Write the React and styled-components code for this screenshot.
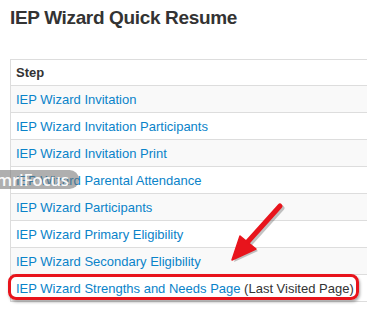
import React from 'react'
import styled, { createGlobalStyle } from 'styled-components'

const steps = [
  'IEP Wizard Invitation',
  'IEP Wizard Invitation Participants',
  'IEP Wizard Invitation Print',
  'IEP Wizard Parental Attendance',
  'IEP Wizard Participants',
  'IEP Wizard Primary Eligibility',
  'IEP Wizard Secondary Eligibility',
  'IEP Wizard Strengths and Needs Page',
]

const GlobalStyle = createGlobalStyle`
  html, body {
    margin: 0;
    padding: 0;
    background: #fff;
    font-family: "Liberation Sans", Arial, sans-serif;
  }
`

function App() {
  return (
    <Page>
      <GlobalStyle />
      <Title>IEP Wizard Quick Resume</Title>
      <Table>
        <thead>
          <tr>
            <Th>Step</Th>
          </tr>
        </thead>
        <tbody>
          {steps.map((step, i) =>
            <Row key={step} striped={i % 2 === 0}>
              <Td>
                <StepLink href="#">{step}</StepLink>
                {i === steps.length - 1 && <Note> (Last Visited Page)</Note>}
              </Td>
            </Row>)}
        </tbody>
      </Table>

      <Highlight />
      <Arrow width="80" height="80" viewBox="0 0 80 80">
        <g transform="translate(2,2)" opacity="0.35">
          <line x1="62" y1="10" x2="26" y2="50" stroke="#555" strokeWidth="5" strokeLinecap="round" />
          <polygon points="14,64 22,40 38,53" fill="#555" />
        </g>
        <line x1="62" y1="10" x2="26" y2="50" stroke="#e8141c" strokeWidth="5" strokeLinecap="round" />
        <polygon points="14,64 22,40 38,53" fill="#e8141c" stroke="#e8141c" strokeWidth="1.5" strokeLinejoin="round" />
      </Arrow>

      <Watermark>mriFocus</Watermark>
    </Page>
  )
}

export default App

const Page = styled.div`
  position: relative;
  width: 367px;
  height: 309px;
  overflow: hidden;
  padding: 6px 0 0 10px;
  box-sizing: border-box;
`

const Title = styled.h1`
  margin: 0 0 29px;
  font-size: 19px;
  line-height: 24px;
  font-weight: bold;
  color: #333;
  letter-spacing: -0.35px;
`

const Table = styled.table`
  width: 400px;
  border-collapse: collapse;
  border-left: 1px solid #ddd;
  border-top: 1px solid #ddd;
  font-size: 13px;
`

const Th = styled.th`
  text-align: left;
  font-weight: bold;
  color: #333;
  height: 26px;
  padding: 0 5px;
  border-bottom: 1px solid #ddd;
  box-sizing: border-box;
`

const Row = styled.tr`
  background: ${p => p.striped ? '#f9f9f9' : '#fff'};
`

const Td = styled.td`
  height: 27px;
  padding: 0 5px;
  border-bottom: 1px solid #ddd;
  box-sizing: border-box;
  white-space: nowrap;
`

const StepLink = styled.a`
  color: #0a83c9;
  text-decoration: none;
`

const Note = styled.span`
  color: #333;
`

const Highlight = styled.div`
  position: absolute;
  left: 8px;
  top: 274px;
  width: 351px;
  height: 26px;
  border: 3px solid #e8141c;
  border-radius: 8px;
  box-sizing: border-box;
  box-shadow: 1px 2px 3px rgba(0, 0, 0, 0.35);
`

const Arrow = styled.svg`
  position: absolute;
  left: 218px;
  top: 196px;
  overflow: visible;
`

const Watermark = styled.div`
  position: absolute;
  left: -10px;
  top: 170px;
  width: 89px;
  height: 19px;
  border-radius: 0 10px 10px 0;
  background: rgba(110, 110, 110, 0.55);
  color: rgba(255, 255, 255, 0.95);
  font-family: "Open Sans", sans-serif;
  font-size: 17px;
  font-weight: 600;
  line-height: 19px;
  padding-left: 6px;
  box-sizing: border-box;
  letter-spacing: -0.3px;
  white-space: nowrap;
`
